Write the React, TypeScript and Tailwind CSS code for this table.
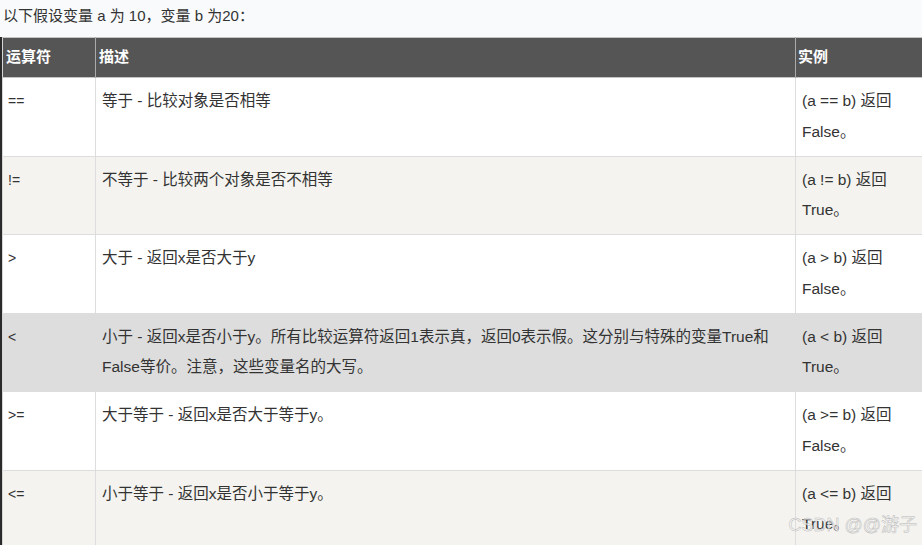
const rows = [
  { op: "==", desc: "等于 - 比较对象是否相等", ex: "(a == b) 返回 False。", bg: "bg-white" },
  { op: "!=", desc: "不等于 - 比较两个对象是否不相等", ex: "(a != b) 返回 True。", bg: "bg-[#f4f3ef]" },
  { op: ">", desc: "大于 - 返回x是否大于y", ex: "(a > b) 返回 False。", bg: "bg-white" },
  {
    op: "<",
    desc: "小于 - 返回x是否小于y。所有比较运算符返回1表示真，返回0表示假。这分别与特殊的变量True和False等价。注意，这些变量名的大写。",
    ex: "(a < b) 返回 True。",
    bg: "bg-[#dddddd]",
  },
  { op: ">=", desc: "大于等于 - 返回x是否大于等于y。", ex: "(a >= b) 返回 False。", bg: "bg-white" },
  { op: "<=", desc: "小于等于 - 返回x是否小于等于y。", ex: "(a <= b) 返回 True。", bg: "bg-[#f4f3ef]" },
];

export default function App() {
  return (
    <div
      className="relative h-[545px] w-[922px] overflow-hidden bg-[#f9fafc] text-[#333]"
      style={{ fontFamily: '"Liberation Sans", Arial, "Noto Sans CJK SC", sans-serif' }}
    >
      <p className="h-[37px] pl-[3px] text-[15px] leading-[31px]">以下假设变量 a 为 10，变量 b 为20：</p>

      <div className="flex border-l-2 border-[#2a2a2a]">
        <table className="w-[940px] shrink-0 table-fixed border-collapse border-l border-[#d6d6d6] text-[15.5px]">
          <colgroup>
            <col className="w-[93px]" />
            <col className="w-[700px]" />
            <col className="w-[147px]" />
          </colgroup>
          <thead>
            <tr className="h-[40px] border-y border-[#c4c4c4] bg-[#555555] text-left text-[15px] font-bold text-white">
              <th className="border-r border-[#aaaaaa] px-[3px]">运算符</th>
              <th className="border-r border-[#aaaaaa] px-[3px]">描述</th>
              <th className="px-[2px]">实例</th>
            </tr>
          </thead>
          <tbody>
            {rows.map((r) => (
              <tr key={r.op} className={`h-[78.5px] border-b border-[#dddddd] align-top leading-[30.5px] ${r.bg}`}>
                <td className="border-r border-[#dddddd] px-[5px] py-[8px] text-[14px]">{r.op}</td>
                <td className="border-r border-[#dddddd] px-[6px] py-[8px]">{r.desc}</td>
                <td className="py-[8px] pl-[6px] pr-[30px]">{r.ex}</td>
              </tr>
            ))}
          </tbody>
        </table>
      </div>

      <div
        className="absolute bottom-[6px] right-[5px] text-[18px] text-white/60"
        style={{ WebkitTextStroke: "0.5px #b8b8b8" }}
      >
        CSDN @@游子
      </div>
    </div>
  );
}
